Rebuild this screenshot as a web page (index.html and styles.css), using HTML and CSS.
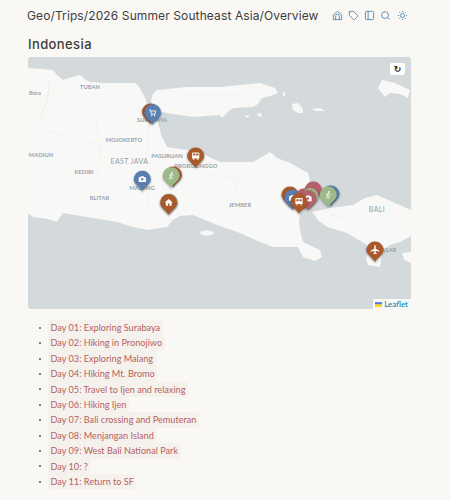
FILE: index.html
```html
<!DOCTYPE html>
<html lang="en">
<head>
    <meta charset="UTF-8">
    <meta name="viewport" content="width=device-width, initial-scale=1.0">
    <title>Overview</title>
    <link rel="stylesheet" href="styles.css">
</head>
<body>
    <header class="top-bar">
        <div class="page-title">Geo/Trips/2026 Summer Southeast Asia/Overview</div>
        <nav class="top-icons">
            <svg viewBox="0 0 24 24"><path d="M3 10.500 12 3l9 7.500V21H3z"/><path d="M8 21v-8a4 4 0 0 1 8 0v8"/></svg>
            <svg viewBox="0 0 24 24"><path d="M3 3h9l9 9a2 2 0 0 1 0 2l-7 7a2 2 0 0 1-2 0l-9-9z"/></svg>
            <svg viewBox="0 0 24 24"><rect x="3" y="3" width="18" height="18" rx="3"/><path d="M9 3v18"/></svg>
            <svg viewBox="0 0 24 24"><circle cx="11" cy="11" r="7.500"/><path d="m21 21-4.500-4.500"/></svg>
            <svg viewBox="0 0 24 24"><circle cx="12" cy="12" r="4.500"/><path d="M12 2v2.500M12 19.500V22M2 12h2.500M19.500 12H22M5 5l1.800 1.800M17.200 17.200 19 19M5 19l1.800-1.800M17.200 6.800 19 5"/></svg>
        </nav>
    </header>

    <main class="content">
        <h2>Indonesia</h2>

        <div class="map">
            <svg class="map-svg" viewBox="28 57 383 252">
                <defs>
                    <path id="pin" d="M0 12C-1.500 8.500-8.500 5-8.500 0A8.500 8.500 0 1 1 8.500 0C8.500 5 1.500 8.500 0 12Z"/>
                    <g id="i-cart"><path class="ico-line" d="M-4.500-3.500H-3L-1.700 1.500H2.800L4-2.200H-2.600"/><circle class="ico" cx="-1.200" cy="3.300" r="1"/><circle class="ico" cx="2.400" cy="3.300" r="1"/></g>
                    <path id="i-bus" class="ico" fill-rule="evenodd" d="M-3.500-4.500H3.500Q4.500-4.500 4.500-3.500V3H-4.500V-3.500Q-4.500-4.500-3.500-4.500ZM-3.300-3V-.5H-.5V-3ZM.5-3V-.5H3.300V-3ZM-3.500 3.500H-1.800V4.800H-3.500ZM1.800 3.500H3.500V4.800H1.800Z"/>
                    <g id="i-hike"><circle class="ico" cx=".8" cy="-3.800" r="1.100"/><path class="ico-line" d="M.3-2-1 .8 1 2.200.7 4.500M-1 .8-2.500 4.500M.3-1.500 2.800-.3M-.3-1.500-2.600-.6"/></g>
                    <path id="i-camera" class="ico" fill-rule="evenodd" d="M-1.800-3.800H1.800L2.500-2.600H4.500V3.400H-4.500V-2.600H-2.500ZM0-1.500A1.500 1.500 0 1 0 0 1.500 1.500 1.500 0 1 0 0-1.500Z"/>
                    <path id="i-home" class="ico" d="M0-4.500 5-.2H3.600V3.800H1V1H-1V3.800H-3.600V-.2H-5Z"/>
                    <path id="i-plane" class="ico" d="M-.9-5.500Q0-6.500.9-5.500V-1.700L5.500 1V2.300L.9.900V3.500L2.200 4.500V5.300L0 4.700-2.200 5.300V4.500L-.9 3.500V.9L-5.500 2.300V1L-.9-1.700Z"/>
                </defs>

                <rect class="water" x="28" y="57" width="383" height="252"/>

                <path class="land" d="M28 68 42 69 53 70 57 75 63 80 72 77 80 75 86 80 90 82 105 83 120 83 135 83 138 85 142 92 146 100 148 107 153 110 167 113 193 117 220 115 222 118 228 112 233 108 253 107 258 104 262 98 270 96 278 93 275 88 260 83 240 85 220 87 187 87 157 90 153 94 151 100 153 110 157 120 162 137 167 147 187 150 205 155 220 162 253 162 262 157 270 152 277 158 290 163 308 173 310 180 306 190 302 203 300 213 299 222 300 230 303 242 320 250 322 257 315 261 303 257 298 247 273 247 260 242 240 233 220 226 210 222 193 215 180 216 173 220 167 227 148 230 133 227 117 222 87 217 63 213 57 222 48 219 33 217 28 213Z"/>
                <path class="land" d="M312 212 330 208 353 205 365 198 377 195 393 202 411 210V236L400 242 390 245 383 250 381 260 380 267 368 265 366 258 369 250 367 245 347 233 327 227 318 220Z"/>
                <path class="land" d="M402 253 411 252V263L404 260Z"/>
                <path class="land" d="M382 80 395 83 410 90 408 98 400 94 390 93 385 97 378 88Z"/>
                <path class="land" d="M292 104 298 103 303 109 303 113 298 113 293 110Z"/>
                <path class="land" d="M311 109 320 108 325 111 316 111Z"/>
                <path class="land" d="M244 115 250 116 247 118Z"/>
                <path class="land" d="M257 114 261 113 262 117 258 116Z"/>
                <path class="land" d="M283 92 285 93 285 96 283 96Z"/>
                <ellipse class="land" cx="207" cy="233" rx="7" ry="2.500"/>

                <path class="road" d="M50 80 47 100 40 118M63 100 90 105 130 110 147 112M45 130 80 140 120 150 165 170 210 175 260 180 300 200M95 110 100 150 95 190M150 120 145 170 150 215M240 170 235 195 260 225M330 215 360 220 395 225M185 95 240 95"/>
                <path class="road-red" d="M50 80 47 100 41 118"/>

                <text class="city" x="90" y="89" text-anchor="middle">TUBAN</text>
                <text class="city small" x="29" y="95">Blora</text>
                <text class="city" x="152" y="121.500" text-anchor="middle">SURABAYA</text>
                <text class="city" x="124" y="141.500" text-anchor="middle">MOJOKERTO</text>
                <text class="city" x="41" y="156.500" text-anchor="middle">MADIUN</text>
                <text class="city region" x="129.500" y="164" text-anchor="middle">EAST JAVA</text>
                <text class="city" x="167" y="158" text-anchor="middle">PASURUAN</text>
                <text class="city" x="196" y="167.500" text-anchor="middle">PROBOLINGGO</text>
                <text class="city" x="84" y="173.500" text-anchor="middle">KEDIRI</text>
                <text class="city" x="142" y="189.500" text-anchor="middle">MALANG</text>
                <text class="city" x="99.500" y="200" text-anchor="middle">BLITAR</text>
                <text class="city" x="240" y="206.500" text-anchor="middle">JEMBER</text>
                <text class="city region" x="377" y="211.500" text-anchor="middle">BALI</text>
                <text class="city" x="381" y="251.500" text-anchor="middle">DENPASAR</text>

                <g class="pin brown" transform="translate(150.500 112)"><use href="#pin"/></g>
                <g class="pin blue" transform="translate(152.700 112.700)"><use href="#pin"/><use href="#i-cart"/></g>
                <g class="pin brown" transform="translate(195.700 156)"><use href="#pin"/><use href="#i-bus"/></g>
                <g class="pin brown" transform="translate(173.500 175)"><use href="#pin"/></g>
                <g class="pin green" transform="translate(171.300 175.700)"><use href="#pin"/><use href="#i-hike"/></g>
                <g class="pin blue" transform="translate(142.300 179.300)"><use href="#pin"/><use href="#i-camera"/></g>
                <g class="pin green" transform="translate(169 202.300)"><use href="#pin"/></g>
                <g class="pin brown" transform="translate(168.700 202.700)"><use href="#pin"/><use href="#i-home"/></g>

                <g class="pin red" transform="translate(313.300 190)"><use href="#pin"/></g>
                <g class="pin brown" transform="translate(290 195)"><use href="#pin"/></g>
                <g class="pin blue" transform="translate(292.700 198)"><use href="#pin"/><use href="#i-camera"/></g>
                <g class="pin red" transform="translate(304 197)"><use href="#pin"/></g>
                <g class="pin green" transform="translate(310 196.500)"><use href="#pin"/></g>
                <g class="pin red" transform="translate(308 198.500)"><use href="#pin"/><use href="#i-camera"/></g>
                <g class="pin blue" transform="translate(331 194)"><use href="#pin"/></g>
                <g class="pin green" transform="translate(328.300 195)"><use href="#pin"/><use href="#i-hike"/></g>
                <g class="pin brown" transform="translate(299 201.700)"><use href="#pin"/><use href="#i-bus"/></g>
                <g class="pin brown" transform="translate(375 250)"><use href="#pin"/><use href="#i-plane"/></g>
            </svg>

            <button class="map-reset">&#8635;</button>
            <div class="map-credit">
                <svg class="flag" viewBox="0 0 12 8"><rect width="12" height="4" fill="#4C7BE1"/><rect y="4" width="12" height="4" fill="#FFD500"/></svg>
                <a>Leaflet</a>
            </div>
        </div>

        <ul class="days">
            <li><a>Day 01: Exploring Surabaya</a></li>
            <li><a>Day 02: Hiking in Pronojiwo</a></li>
            <li><a>Day 03: Exploring Malang</a></li>
            <li><a>Day 04: Hiking Mt. Bromo</a></li>
            <li><a>Day 05: Travel to Ijen and relaxing</a></li>
            <li><a>Day 06: Hiking Ijen</a></li>
            <li><a>Day 07: Bali crossing and Pemuteran</a></li>
            <li><a>Day 08: Menjangan Island</a></li>
            <li><a>Day 09: West Bali National Park</a></li>
            <li><a>Day 10: ?</a></li>
            <li><a>Day 11: Return to SF</a></li>
        </ul>
    </main>
</body>
</html>
```

FILE: styles.css
```css
body {
    margin: 0;
    background-color: #faf8f4;
    font-family: Lato, Arial, sans-serif;
    color: #3d3d3d;
}
.top-bar {
    display: flex;
    align-items: center;
    height: 30px;
    padding-left: 27px;
}
.page-title {
    width: 303.5px;
    font-family: Inter, sans-serif;
    font-size: 12px;
    letter-spacing: 0.11px;
    white-space: nowrap;
}
.top-icons {
    display: flex;
    gap: 5.25px;
    margin-left: 1px;
}
.top-icons svg {
    width: 11px;
    height: 11px;
    fill: none;
    stroke: #5b84a8;
    stroke-width: 2;
}
.content {
    padding-left: 28px;
}
h2 {
    margin: 0;
    padding-top: 7px;
    height: 20px;
    font-family: Inter, sans-serif;
    font-size: 13px;
    font-weight: 500;
    letter-spacing: 0.4px;
    line-height: 15px;
}
.map {
    position: relative;
    width: 383px;
    height: 252px;
    border-radius: 3px;
    overflow: hidden;
}
.map-svg {
    display: block;
    width: 383px;
    height: 252px;
}
.water {
    fill: #d4dadc;
}
.land {
    fill: #f8f8f6;
}
.road {
    fill: none;
    stroke: #f1f1ef;
    stroke-width: 0.7;
}
.road-red {
    fill: none;
    stroke: #f3e4e0;
    stroke-width: 0.6;
}
.city {
    font-family: Lato, sans-serif;
    font-size: 5.7px;
    font-weight: 700;
    letter-spacing: 0.1px;
    fill: #93a0ae;
}
.city.small {
    font-size: 5px;
    letter-spacing: 0;
}
.city.region {
    font-size: 7px;
    font-weight: 400;
    letter-spacing: 0.4px;
}
.pin {
    filter: drop-shadow(0 1px 1px rgba(0, 0, 0, 0.4));
}
.pin use + use {
    transform: scale(0.8);
}
.brown use:first-child { fill: #a9592c; }
.blue use:first-child { fill: #5a7fae; }
.green use:first-child { fill: #9cb98a; }
.red use:first-child { fill: #b5616b; }
.ico {
    fill: #fff;
}
.ico-line {
    fill: none;
    stroke: #fff;
    stroke-width: 1.1;
}
.map-reset {
    position: absolute;
    top: 6px;
    right: 6px;
    width: 15px;
    height: 12px;
    padding: 0;
    border: none;
    border-radius: 2px;
    background-color: #fff;
    color: #222;
    font-family: "DejaVu Sans", sans-serif;
    font-size: 9px;
    font-weight: bold;
    line-height: 12px;
}
.map-credit {
    position: absolute;
    right: 0;
    bottom: 0;
    display: flex;
    align-items: center;
    gap: 2px;
    height: 10px;
    padding: 0 3px 0 2px;
    background-color: rgba(255, 255, 255, 0.8);
    font-size: 8px;
}
.map-credit a {
    color: #0078a8;
}
.flag {
    width: 7px;
    height: 5px;
}
.days {
    margin: 11px 0 0;
    padding: 0 0 0 10.5px;
    list-style: none;
    font-size: 9.15px;
    line-height: 15.4px;
}
.days li {
    display: flex;
    align-items: center;
    gap: 7.5px;
}
.days li::before {
    content: "";
    width: 2px;
    height: 2px;
    border-radius: 50%;
    background-color: #555;
}
.days a {
    padding: 0 2.5px;
    border-radius: 2px;
    background-color: #f5f2ed;
    color: #b55f5f;
}
```
